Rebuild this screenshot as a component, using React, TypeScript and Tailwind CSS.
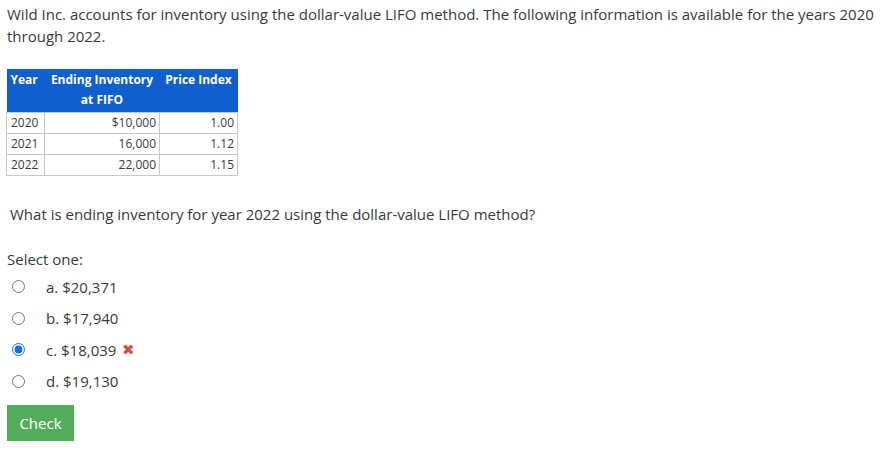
import React from "react";

const rows = [
  ["2020", "$10,000", "1.00"],
  ["2021", "16,000", "1.12"],
  ["2022", "22,000", "1.15"],
];

const options = [
  { l: "a.", v: "$20,371" },
  { l: "b.", v: "$17,940" },
  { l: "c.", v: "$18,039", checked: true },
  { l: "d.", v: "$19,130" },
];

export default function App() {
  return (
    <div
      className="w-[886px] h-[460px] bg-white text-[#373a3c] px-[7px] pt-[3px]"
      style={{ fontFamily: '"Open Sans", sans-serif' }}
    >
      <p className="text-[15px] leading-[22px]">
        Wild Inc. accounts for inventory using the dollar-value LIFO method. The following information is available for the years 2020 through 2022.
      </p>
      <table className="mt-[22px] border-collapse text-[12px] leading-[20px] ml-[-1px]">
        <thead>
          <tr className="bg-[#0f5fcf] text-white font-bold align-top">
            <th className="px-[4px] pt-[1px] pb-[2px] w-[38px] text-left">Year</th>
            <th className="px-[4px] pt-[1px] pb-[2px] w-[115px] text-center">
              Ending Inventory
              <br />
              at FIFO
            </th>
            <th className="px-[4px] pt-[1px] pb-[2px] w-[78px] text-center">Price Index</th>
          </tr>
        </thead>
        <tbody>
          {rows.map((r) => (
            <tr key={r[0]} className="h-[21px]">
              <td className="border border-[#c8c8c8] px-[4px] text-left">{r[0]}</td>
              <td className="border border-[#c8c8c8] px-[3px] text-right">{r[1]}</td>
              <td className="border border-[#c8c8c8] px-[3px] text-right">{r[2]}</td>
            </tr>
          ))}
        </tbody>
      </table>
      <p className="text-[15px] leading-[22px] mt-[27px] pl-[3px]">
        What is ending inventory for year 2022 using the dollar-value LIFO method?
      </p>
      <div className="text-[15px] leading-[22px] mt-[23px]">Select one:</div>
      <div className="flex flex-col mt-[1px]">
        {options.map((o) => (
          <label key={o.l} className="flex items-center h-[31.5px] text-[15px]">
            <input
              type="radio"
              name="q"
              defaultChecked={o.checked}
              className="w-[13px] h-[13px] m-0 ml-[5px] accent-[#0b6ef6]"
            />
            <span className="ml-[21px]">
              {o.l} {o.v}
            </span>
            {o.checked && <span className="ml-[6px] text-[#d94a3f] text-[15px] leading-none">✖</span>}
          </label>
        ))}
      </div>
      <button className="mt-[8px] bg-[#52ad5b] text-white text-[15px] h-[36px] px-[12px] w-[67px]">
        Check
      </button>
    </div>
  );
}
